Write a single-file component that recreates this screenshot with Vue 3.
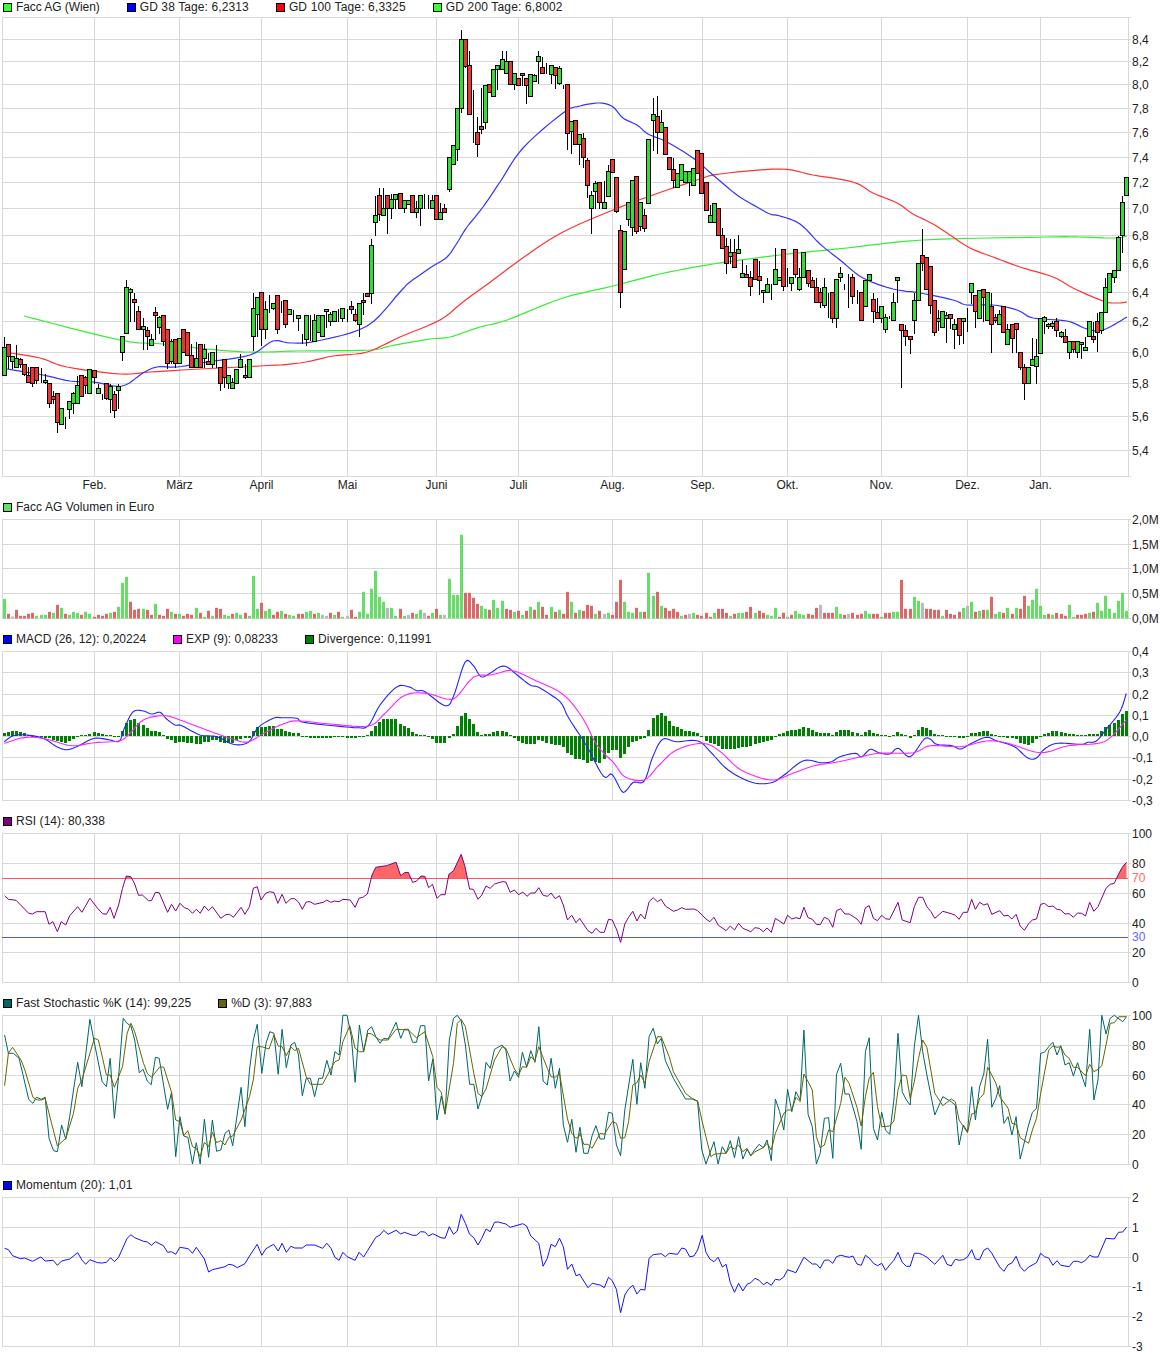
<script setup>
const N = 276
const barX = (i) => Math.floor(4.08 * i + 4.3) + 0.5
const monthX = [94, 179, 261, 347, 436, 518, 612, 702, 787, 881, 967, 1040]
const months = ['Feb.', 'März', 'April', 'Mai', 'Juni', 'Juli', 'Aug.', 'Sep.', 'Okt.', 'Nov.', 'Dez.', 'Jan.']
const LEFT = 2
const RIGHT = 1128

// flat [x, y, x, y...] to page coordinates
function pts(flat, x0 = 0, sx = 1, y0 = 0, sy = 1) {
  const out = []
  for (let i = 0; i < flat.length; i += 2) out.push([x0 + flat[i] / sx, y0 + flat[i + 1] / sy])
  return out
}
const str = (list) => list.map((p) => p[0].toFixed(1) + ',' + p[1].toFixed(1)).join(' ')
// second half wins where the two readings overlap
const join = (a, b) => [...a.filter((p) => p[0] < b[0][0]), ...b]
// catmull-rom through the read points, for the slow curves
function smooth(list, steps = 6) {
  const out = []
  for (let i = 0; i < list.length - 1; i++) {
    const p0 = list[Math.max(0, i - 1)]
    const p1 = list[i]
    const p2 = list[i + 1]
    const p3 = list[Math.min(list.length - 1, i + 2)]
    for (let s = 0; s < steps; s++) {
      const t = s / steps
      const at = (k) => 0.5 * (2 * p1[k] + (p2[k] - p0[k]) * t + (2 * p0[k] - 5 * p1[k] + 4 * p2[k] - p3[k]) * t * t + (3 * p1[k] - p0[k] - 3 * p2[k] + p3[k]) * t * t * t)
      out.push([at(0), at(1)])
    }
  }
  out.push(list[list.length - 1])
  return out
}

// candles, read off at 3x: colour + top,bottom,high,low
const candleBlocks = [
  { start: 0, base: 250, rows: `g292,376,258,376 r283,319,283,355 g319,334,319,355 g325,352,283,352 r328,343,322,352 r343,373,343,376 r376,397,349,397 r352,400,352,409 r352,391,352,400 t397,397,352,397 g391,397,370,400
    r400,460,400,470 r439,448,421,460 r430,517,430,545 g475,523,475,523 t499,499,499,533 g454,478,454,505 g430,460,424,488 g406,460,376,460
    r376,439,376,439 r382,406,376,430 g358,430,358,430 r361,382,361,400 g415,430,400,430 t439,439,430,448 r400,445,400,448 g409,448,400,485 r433,479,421,500 g409,421,400,475 g259,307,259,330 g112,250,88,250
    g118,127,112,214 r148,157,127,214 r184,238,166,238 g229,238,202,298 r241,259,229,298 g268,286,250,286 r187,196,169,268 g202,232,196,250 r196,274,196,286 r238,340,238,355 g274,334,265,340 r268,340,265,352 g265,340,265,340
    r238,307,238,307 r247,316,247,316 r316,352,280,352 g325,352,274,352 r283,352,283,352 g298,325,280,352 r334,343,307,343 g307,343,307,352 t343,343,283,352 r352,400,352,421 r328,382,328,412 g376,400,376,415 g397,415,380,415
    g358,400,355,400 g328,352,310,352 r376,382,340,385 g328,382,328,382 g175,259,127,300 g142,193,142,259 r127,238,127,285 g178,238,150,265 t133,133,133,185 g160,175,160,178 r136,238,136,250 t151,151,151,185
    r151,223,151,232 g178,193,178,193 t176,176,176,214 g196,205,196,240 t259,259,250,280 g196,268,196,285 t193,193,193,270 g211,274,190,274 g196,247,196,247 g196,259,196,259 g178,184,178,232 g193,214,184,225 g184,214,184,214 t187,187,175,214
    g175,205,175,214 t178,178,175,214 r169,178,150,190 r193,211,175,214 g160,223,160,258 r151,157,127,193 r130,139,127,139` },
  { start: 90, base: 0, rows: `g735,880,715,910 g646,667,586,706 r586,643,562,661 g625,646,562,646 r586,625,586,700 g598,625,580,655 g583,598,580,625` },
  { start: 97, base: 20, rows: `r520,565,520,565 g541,565,541,575 g541,553,541,553 r526,577,526,577 g565,577,540,590 g526,565,526,614 t527,527,520,565 t565,565,523,565 g541,565,523,565 r526,598,526,598 g577,598,545,598 r565,577,550,577
    g412,508,412,514 g376,433,373,433 g265,388,265,420 g58,265,28,275 r58,139,58,142 r136,283,91,283 t285,285,207,365 r337,373,289,408 r319,328,202,340 g196,307,196,325 r193,217,193,217 g148,229,148,229 g136,148,136,208 g118,148,90,148 g124,160,90,160 r124,193,124,193 g160,193,160,206 r175,196,175,196 r160,166,160,196 r175,196,175,248 g163,229,163,229 g166,184,160,184 g109,124,91,188
    r142,160,109,160 t160,160,127,160 g136,163,136,188 r142,166,142,205 g145,190,136,193 t204,204,193,204 r193,340,193,387 g304,334,304,400 r301,373,301,373 g343,373,343,433 r355,412,335,440 r421,496,412,530 g526,565,510,640 g490,514,480,565 r487,547,487,565 g547,565,480,565 g454,529,432,529 r418,457,418,457 r472,574,472,577
    r631,817,613,860 g634,748,631,748 g547,598,547,616 g481,622,481,645 r469,634,469,640 g547,619,547,631 r586,625,565,634 g358,550,358,550 g283,301,232,391 r289,337,226,400 g307,337,268,337 r322,403,322,403 r412,448,412,448 r448,481,412,500 g460,502,460,502 g433,481,433,481 g454,487,454,487 g454,487,454,524 g445,496,445,496
    r391,460,391,460 r400,520,400,520 r487,571,487,571 g586,607,553,607 g550,607,550,607 r565,646,565,646 r646,685,622,685 r679,730,650,760 g697,709,655,730 r697,742,655,742 g688,700,643,700 g760,772,718,772 r763,772,733,772 r772,799,750,826 r718,778,718,778 r769,781,720,823 g811,817,811,847 g793,817,772,817 t838,838,790,838 g748,793,680,793 g772,780,772,780` },
  { start: 191, base: 150, rows: `r297,409,297,420 t352,352,352,409 g382,400,382,421 r297,373,297,382 g382,418,352,421 g307,382,307,382 r361,400,361,409 r391,412,379,412 r412,457,382,457 r427,457,412,470 g412,466,382,470 t427,427,427,500 r427,505,427,517 g388,505,388,530 g370,382,348,394 t418,418,400,418 t418,418,370,470
    r382,439,370,460 t460,460,418,460 r427,511,427,511 g391,469,391,469 g373,391,373,391 r448,484,427,515 r487,505,440,505 g469,505,469,515 g502,538,490,547 t505,505,495,505 g457,511,427,511 g382,391,382,457 r523,541,523,710 r541,559,523,585 r559,568,559,608
    g451,511,427,550 g340,451,340,451 r316,340,235,361 r322,418,322,418 r349,466,349,490 r451,547,451,556 g505,514,478,540 g484,532,484,532 g496,505,484,577 r493,505,493,535 g523,538,505,593 r505,556,505,583 g505,514,505,580 t505,505,470,543 g400,427,400,460 r436,484,436,532 g421,505,421,505 r418,442,418,514 g427,511,427,511 r469,523,427,607 r502,511,490,515 g493,523,478,523
    r469,547,469,547 g538,583,520,583 r523,565,523,607 r520,538,520,607 r607,650,607,658 r652,700,640,748 g652,700,652,700 g628,646,560,646 g619,649,565,700 g505,610,505,610 g502,514,495,550 g523,529,517,535 g520,529,510,535 r514,541,502,557 g547,559,541,560 r559,577,535,577 g574,607,574,625 r574,598,574,607 g574,607,574,622 g577,583,577,625 g592,601,559,601 g514,559,514,559 r559,568,514,577 r514,547,487,602 g487,541,487,550
    g412,487,380,487 g370,427,370,427 g361,382,361,397 g262,361,256,361 g157,256,136,307 g82,136,79,136` },
]
const candleFill = { g: '#33dd33', r: '#ee3333', t: '#000000' }
const candles = []
for (const block of candleBlocks) {
  block.rows.trim().split(/\s+/).forEach((tok, k) => {
    const [t, b, h, l] = tok.slice(1).split(',').map((v) => Math.round(block.base + v / 3) + 0.5)
    const x = barX(block.start + k)
    candles.push({ x, t, b, h, l, fill: candleFill[tok[0]] })
  })
}

// volume: colour + top of bar at 3x (base line 371)
const volHead = `g312 r357 n365 r345 r363 r363 r357 r354 g363 g360 g360 r351 g354 r330 g339 r357 g360 g351 g354 r360 g351 g357 r366 r360 r363 r357 g354 r351 g336 g264 g246 r321 r345 r342 g342 r345 r360 g327 r360 r363 r342 g351 r357 g357 r363 r357 r360 g339 r354 g366 r348 g363 r339 r342 g360 g363 r357 g354 g360 r354 g363 g243 g342 r324 g348 g342 r360 r351 g348 r357 g360 g363 r357 r357 g351 g348 r357 g354 n360 n363 r354 g360 r351 g366 n363 r345 r366 g351 g291 g357 g282 g228 g306 g321 n339 g339 g363 r342 g363 n360 r354 g357 g345 n354 r363 g354 r342 g360 n360 g252 g300 g300 g120 r294 r294 r309 r327 g333 g342 r345 g315 g339`
const volTail = `g318 r342 r345 g351 r348 g360 r348 g336 r345 g321 r336 r360 g336 r351 g345 r357 r291 g321 r354 g345 r348 r330 r333 g357 r348 n357 g354 r360 r321 r255 g321 g351 g354 r339 g351 r351 g234 g303 r291 g333 r339 r348 r342 r351 g363 r360 n357 g354 r360 r363 r354 r366 g354 r342 r342 r354 g363 r357 g354 g354 r351 r336 g354 r348 r354 g360 g363 g339 r366 r354 g366 r360 g348 g357 g360 r357 r360 r339 n330 r354 r354 r354 g336 g357 r360 n357 r354 r360 r357 g348 g357 r357 r357 g366 r354 r354 g351 g351 r255 r342 r342 g306 g318 n324 r342 r342 r345 r345 g363 r345 r357 r360 r351 g339 n333 g321 r351 g348 r345 g345 r306 g357 g351 r354 g339 r357 g339 r342 r303 g333 g315 g282 g333 g360 r357 g360 r354 r357 r363 g330 g366 r360 r360 r357 g354 r351 g324 g348 g303 g342 g354 g318 g294 g348`
const volFill = { g: '#66dd66', r: '#dd6666', n: '#bbbbbb' }
const volBase = 618.5
const parseVol = (text, start) => text.split(' ').map((tok, k) => {
  const height = (371 - Number(tok.slice(1))) / 3
  return { x: barX(start + k) - 1.5, y: volBase - height, w: 3, h: height, fill: volFill[tok[0]] }
})
const headBars = parseVol(volHead, 0)
const tailList = volTail.split(' ')
const tailBars = parseVol(volTail, N - tailList.length)
const volBars = [...headBars.filter((b) => b.x < tailBars[0].x), ...tailBars]

// MACD
const histKeys = [
  ...pts([13,8,37,15,49,16,73,8,85,4,97,0,121,-3,145,-6,170,-14,196,-20,208,-14,220,-10,233,0,259,4,283,12,307,6,331,3,355,0,367,14,379,40,394,50,406,52,418,36,430,34,442,24,454,16,466,16,478,12,490,3,502,-10,514,-13,526,-20,538,-17,553,-20,577,-22,601,-23,613,-18,625,-18,637,-12,650,-12,661,-18,673,-20,685,-20,697,-22,712,-10,736,-6,748,-6,760,15,772,28,796,28,820,30,832,22,844,22,858,13,882,10,895,8,907,-3,955,-6,991,-6,1015,-3,1066,-6,1090,-3,1102,2,1114,14,1126,30,1138,42,1150,50,1190,50,1201,35,1213,30,1225,24,1237,12,1249,6,1273,3,1285,-3,1297,-10,1309,-20,1324,-22,1336,-22,1348,-8,1360,5,1372,28,1384,60,1396,70,1408,52,1420,38,1432,12,1444,2,1456,5,1468,5,1483,12,1495,15], 0, 3, 0, 3),
  ...pts([5,15,15,12,24,2,33,-6,42,-15,52,-20,61,-25,80,-25,89,-12,101,-17,120,-24,138,-28,147,-32,156,-50,166,-58,175,-68,193,-70,203,-82,214,-75,224,-80,233,-80,242,-72,252,-50,261,-42,270,-42,280,-65,289,-55,298,-35,308,-18,317,-15,326,-8,338,-5,347,25,356,55,366,62,375,68,384,60,394,45,403,30,412,26,421,22,431,16,440,14,451,12,461,10,470,-3,480,-14,489,-20,498,-24,507,-28,517,-38,526,-40,535,-40,545,-38,554,-35,573,-32,584,-28,593,-24,612,-18,621,-14,630,-12,640,-3,649,6,658,10,668,15,677,18,698,20,707,28,726,18,735,12,745,8,763,10,772,4,782,12,791,17,810,17,821,12,830,10,840,2,849,12,858,17,868,10,877,5,896,2,905,-2,915,4,924,12,935,4,944,2,953,-8,963,3,972,18,981,28,991,24,1000,18,1009,6,1028,2,1048,-2,1067,-6,1076,-5,1086,-2,1095,9,1104,10,1123,15,1132,15,1141,6,1151,4,1170,-3,1199,-8,1209,-20,1228,-26,1237,-20,1247,-8,1256,-2,1265,5,1284,16,1303,12,1322,6,1350,3,1368,5,1387,6,1396,15,1408,27,1417,33,1426,38,1436,47,1445,65,1455,76], 500, 2.323, 0, 3),
]
function histAt(x) {
  let k = 0
  while (k < histKeys.length - 2 && histKeys[k + 1][0] < x) k++
  const [x1, y1] = histKeys[k]
  const [x2, y2] = histKeys[k + 1]
  const f = Math.min(1, Math.max(0, (x - x1) / (x2 - x1)))
  return y1 + (y2 - y1) * f
}
const macdZero = 736
const histBars = Array.from({ length: N }, (_, i) => {
  const x = barX(i)
  const v = Math.round(histAt(x))
  return { x: x - 1.5, y: v > 0 ? macdZero - v : macdZero, w: 3, h: Math.max(1, Math.abs(v)), fill: '#008000' }
})

const macdLine = join(
  pts([13,740,40,722,80,720,130,730,170,755,200,764,230,755,283,730,330,735,358,738,375,695,400,650,430,648,455,657,480,652,500,672,525,690,545,692,600,720,650,725,700,748,745,742,775,697,820,670,845,668,890,670,910,682,1000,692,1070,698,1105,692,1140,630,1190,576,1225,575,1250,587,1275,590,1335,632,1360,605,1395,502,1420,512,1443,545,1470,535,1497,517], 0, 3, 495, 3),
  pts([15,515,40,540,70,570,90,577,130,610,145,630,160,670,200,750,240,843,260,838,282,887,292,888,310,862,335,858,355,785,378,733,410,740,460,738,490,772,530,825,585,862,630,863,660,840,705,797,745,803,770,800,790,785,825,775,840,785,860,763,880,773,905,777,925,760,953,785,985,733,1000,733,1015,748,1050,752,1070,762,1095,745,1130,727,1155,738,1195,755,1225,788,1245,790,1265,762,1295,745,1350,748,1365,742,1385,738,1410,700,1440,650,1455,595], 500, 2.323, 495, 3),
)
const expLine = join(
  pts([13,745,60,730,100,727,150,735,215,752,283,743,355,738,385,720,430,675,490,662,540,675,620,705,700,733,745,740,800,710,860,683,900,678,1000,688,1105,693,1150,660,1200,610,1240,594,1290,597,1340,612,1370,605,1420,547,1470,540,1497,534], 0, 3, 495, 3),
  pts([30,527,80,555,145,597,190,665,225,750,265,805,290,845,335,855,370,810,410,765,470,745,510,768,560,825,630,855,680,835,730,812,780,802,840,785,880,775,960,773,1000,752,1070,755,1130,738,1180,745,1255,773,1320,752,1390,745,1420,725,1455,675], 500, 2.323, 495, 3),
)

// RSI
const rsiLine = join(
  pts([12,257,22,268,42,271,75,310,85,312,95,305,118,305,128,343,138,335,150,365,160,335,172,345,182,317,203,290,214,307,235,265,255,295,268,311,278,313,288,292,298,325,310,285,320,235,330,198,342,200,352,222,362,256,372,255,388,272,396,272,406,247,416,248,438,307,448,283,459,303,470,280,482,293,492,297,503,310,513,298,523,310,534,288,545,302,555,290,577,325,590,314,600,313,610,322,630,292,640,313,652,290,662,235,672,230,682,270,694,250,705,245,716,248,726,280,737,253,747,280,760,266,770,266,780,276,790,298,800,276,810,275,822,283,845,277,854,270,864,277,874,273,886,275,896,268,915,270,928,292,938,265,948,262,960,252,972,195,982,172,1010,167,1035,157,1047,197,1057,188,1067,187,1078,217,1088,214,1100,198,1110,199,1120,233,1130,223,1142,265,1152,254,1163,254,1173,193,1185,182,1205,133,1215,170,1227,237,1237,238,1249,268,1259,255,1270,228,1281,235,1292,222,1312,215,1322,216,1333,247,1344,240,1355,254,1366,246,1377,259,1387,249,1398,249,1408,233,1419,256,1430,259,1440,249,1451,266,1462,257,1472,285,1483,330,1494,316,1505,338,1515,325,1535,365,1546,372,1557,355], 0, 2.613, 810, 3),
  pts([0,327,21,362,32,370,42,355,53,367,64,367,75,328,85,330,97,360,107,397,118,342,128,322,139,304,150,333,160,312,171,327,182,275,193,263,204,275,214,268,225,288,246,304,257,300,268,293,278,298,300,297,310,302,332,327,342,335,353,322,364,345,385,362,396,348,407,360,418,340,429,355,450,365,461,353,472,355,483,365,493,354,504,367,515,325,537,342,547,316,558,327,569,323,580,326,590,292,601,323,612,328,623,343,633,344,644,322,655,328,666,352,676,302,687,296,698,312,709,312,730,327,741,343,752,293,762,287,773,325,784,332,795,316,805,326,816,328,838,277,849,330,870,338,881,290,892,262,903,262,914,290,924,304,935,325,956,304,978,311,989,316,999,328,1010,307,1021,307,1032,268,1042,298,1053,277,1064,285,1074,281,1085,313,1106,302,1117,318,1128,316,1138,327,1149,313,1160,348,1171,361,1182,341,1192,330,1203,327,1214,283,1224,280,1235,290,1246,288,1257,298,1267,300,1278,312,1289,311,1300,322,1311,309,1322,310,1332,318,1343,277,1354,304,1365,290,1386,235,1397,223,1408,220,1420,190,1430,170,1440,157], 580, 2.635, 810, 3),
)
const rsiArea = str([[rsiLine[0][0], 878.5], ...rsiLine, [rsiLine[rsiLine.length - 1][0], 878.5]])

// stochastic
const stochK = join(
  pts([12,135,22,190,35,190,50,205,75,328,86,340,95,322,108,328,118,322,128,445,140,482,150,485,161,405,172,448,182,380,192,300,203,217,214,290,235,88,245,150,267,275,278,290,288,205,299,385,310,260,322,85,332,100,342,108,352,150,364,248,374,238,385,273,395,284,406,202,416,205,438,358,448,307,459,500,470,380,480,438,491,442,503,522,513,458,523,522,534,388,545,502,555,390,566,484,577,480,588,430,598,420,608,467,630,292,640,410,652,240,662,150,672,103,684,250,695,160,705,125,716,130,727,253,737,118,748,233,760,165,770,157,780,195,790,317,800,265,811,265,822,320,833,265,843,265,854,211,865,255,875,185,886,195,896,76,907,76,918,140,928,277,939,105,950,185,961,120,971,110,982,140,993,160,1003,145,1014,147,1035,97,1047,145,1057,118,1067,118,1078,157,1088,157,1099,107,1110,107,1120,273,1131,207,1142,390,1153,318,1163,373,1174,150,1185,85,1195,76,1205,92,1216,165,1227,283,1238,283,1249,357,1259,320,1270,217,1281,235,1292,178,1312,165,1322,180,1333,273,1344,243,1355,262,1365,187,1376,230,1387,182,1398,217,1408,110,1419,273,1430,285,1440,205,1451,295,1462,235,1472,405,1483,457,1494,388,1505,487,1515,412,1526,490,1537,490,1557,407], 0, 2.613, 990, 3),
  pts([0,412,10,490,21,490,32,437,42,407,53,447,64,447,75,367,85,370,96,465,107,497,118,360,139,208,150,343,160,218,171,295,182,140,193,115,204,162,214,145,225,212,246,265,278,327,300,327,310,335,321,480,332,522,353,455,364,522,375,470,385,490,396,452,407,503,418,440,429,507,440,478,450,497,461,478,472,463,483,473,493,450,504,512,515,327,526,365,537,420,547,298,558,365,569,305,580,330,590,120,601,373,612,410,623,522,633,490,644,385,655,383,666,505,676,253,687,220,698,312,709,312,730,395,741,478,752,185,762,143,773,415,784,450,795,367,805,420,816,433,827,330,838,130,849,305,860,330,870,345,881,170,892,76,903,185,914,255,935,375,956,320,978,335,989,345,999,465,1010,405,1021,425,1032,290,1042,390,1053,290,1064,252,1074,148,1085,352,1096,325,1106,287,1117,400,1128,380,1138,435,1149,380,1160,507,1182,405,1192,367,1203,355,1214,190,1224,187,1235,170,1246,157,1257,195,1267,167,1278,225,1289,218,1300,258,1311,218,1332,290,1343,118,1354,330,1365,270,1375,76,1386,132,1397,85,1408,76,1430,95,1440,80], 580, 2.635, 990, 3),
)
const stochD = join(
  pts([12,287,22,190,33,172,55,210,65,240,86,322,97,330,108,330,118,325,150,468,172,445,192,370,203,295,214,270,235,190,247,145,257,150,278,255,288,255,299,292,320,230,332,130,342,100,352,125,375,220,385,250,396,262,418,230,428,232,448,307,459,390,470,395,480,437,491,422,503,470,513,475,523,500,534,457,545,470,555,427,566,458,577,452,588,465,598,442,608,438,630,390,652,320,662,270,672,170,684,170,703,177,716,135,727,168,737,170,748,197,760,170,770,182,780,175,800,260,811,283,843,283,865,235,875,215,886,210,896,155,914,107,928,175,939,185,950,185,961,130,971,132,993,150,1014,150,1035,118,1067,120,1088,143,1110,125,1131,200,1142,292,1153,307,1163,370,1185,220,1195,100,1205,88,1216,110,1238,250,1249,310,1259,320,1270,297,1292,210,1312,170,1322,175,1344,237,1355,255,1365,230,1376,232,1387,200,1398,212,1408,170,1430,235,1440,260,1451,262,1462,250,1483,387,1494,430,1505,445,1515,437,1526,463,1537,463,1547,470], 0, 2.613, 990, 3),
  pts([0,430,10,463,21,463,32,475,53,430,64,433,85,395,96,400,107,445,118,443,128,395,139,285,150,278,160,255,171,280,182,215,204,140,214,140,235,200,246,245,278,310,300,330,310,332,321,390,345,500,353,493,375,490,385,490,396,470,407,477,418,465,429,485,440,475,450,497,461,485,483,473,493,460,504,480,515,430,537,370,547,360,558,360,569,322,580,335,590,252,601,275,612,300,623,440,633,473,644,465,655,420,666,425,687,340,698,262,709,280,730,352,741,408,752,320,762,265,773,247,784,350,795,410,816,408,827,393,838,300,849,255,860,257,870,325,881,275,892,205,903,150,914,172,935,310,956,347,978,327,989,335,999,390,1021,428,1032,372,1042,368,1053,325,1064,312,1074,232,1085,255,1096,280,1106,320,1128,355,1138,400,1149,403,1160,443,1182,460,1192,420,1203,385,1214,310,1235,180,1246,168,1257,172,1267,170,1278,195,1289,205,1300,232,1311,232,1332,257,1343,223,1354,245,1365,238,1375,227,1386,165,1397,100,1408,98,1420,80,1440,80], 580, 2.635, 990, 3),
)

// momentum
const momLine = join(
  pts([12,220,22,224,33,242,53,251,64,249,85,259,107,246,118,258,139,256,150,271,161,258,182,252,203,233,214,255,224,268,235,254,255,263,267,264,278,262,289,248,299,260,310,247,332,190,342,179,352,188,375,199,385,201,396,211,406,200,427,212,438,232,448,230,459,238,470,217,492,221,503,235,513,217,534,252,545,291,555,284,588,275,598,268,608,270,620,278,640,266,652,243,672,208,684,241,695,221,715,208,727,228,737,205,748,232,760,214,770,219,790,219,800,210,822,210,843,220,854,205,865,220,875,247,886,256,896,232,907,245,928,256,938,232,950,246,961,226,982,187,993,180,1003,166,1014,178,1035,166,1047,177,1057,172,1078,181,1088,181,1099,170,1110,171,1120,183,1131,176,1152,188,1163,190,1174,155,1185,178,1195,168,1205,118,1216,145,1227,178,1238,188,1249,210,1259,190,1270,162,1281,170,1292,142,1302,141,1322,147,1333,157,1366,146,1376,153,1387,183,1408,205,1419,274,1430,250,1440,208,1451,215,1462,190,1472,215,1483,283,1494,267,1505,302,1515,298,1536,338,1547,324], 0, 2.613, 1175, 3),
  pts([0,300,21,338,32,325,53,330,64,338,75,307,85,317,96,343,107,413,118,360,128,342,139,331,150,357,160,343,171,345,182,250,193,239,214,236,225,245,235,235,257,238,268,219,278,222,289,245,300,243,310,225,322,181,332,232,342,252,353,260,364,247,375,276,385,268,396,323,407,352,418,325,429,348,440,328,450,323,461,310,472,316,483,329,493,322,504,331,515,313,526,315,537,306,547,284,569,293,590,247,612,267,623,267,633,280,644,256,655,255,666,265,676,245,687,241,709,247,719,243,730,267,741,271,752,241,762,249,773,265,784,272,795,265,805,286,816,270,827,256,838,232,849,262,860,274,870,274,881,235,892,235,903,239,914,247,935,268,956,241,967,268,978,273,989,253,999,256,1010,254,1021,246,1032,224,1042,252,1053,254,1064,226,1074,219,1085,235,1106,276,1117,289,1128,269,1138,264,1149,244,1160,275,1171,289,1182,276,1203,263,1214,235,1224,245,1235,249,1246,271,1257,257,1267,271,1289,275,1300,259,1311,259,1322,263,1332,256,1343,241,1354,246,1365,246,1386,190,1408,192,1419,172,1430,171,1440,157], 580, 2.635, 1175, 3),
)

// moving averages, already in page coordinates
const gd200 = pts([24,316,120,340,163,344,207,349,250,352,300,351,370,350,390,346,430,339,450,337,480,327,507,320,563,298,613,286,660,274,713,264,780,255,847,248,923,240,1047,237,1080,237,1113,238,1127,236])
const gd100 = pts([10,353,40,358,67,367,120,374,150,372,200,369,260,366,300,363,333,356,367,352,400,337,440,320,463,302,493,280,527,255,563,232,613,210,653,195,700,179,720,174,780,169,813,175,853,182,873,193,897,203,913,214,933,224,953,237,970,248,993,257,1020,267,1053,277,1073,288,1103,301,1117,303,1127,302])
const gd38 = pts([7,369,43,375,70,381,93,382,122,386,143,373,157,367,177,367,207,362,250,355,273,341,290,343,317,341,367,326,400,292,410,282,433,266,447,257,457,243,467,227,483,207,500,182,523,148,563,113,580,106,600,103,613,107,623,118,637,125,648,134,667,142,693,158,713,175,737,195,757,207,770,214,780,216,800,224,820,244,840,260,863,278,893,289,920,293,953,300,967,305,993,305,1017,310,1033,318,1067,321,1087,329,1103,330,1127,317])

const line = (list, color, width = 1) => ({ points: str(list), color, width })
const straight = (y, color) => ({ points: LEFT + ',' + y + ' ' + RIGHT + ',' + y, color, width: 1 })

const panels = [
  {
    key: 'kurs', top: 13, height: 487,
    legend: [
      { color: '#33ff33', label: 'Facc AG (Wien)', spacing: -0.07 },
      { color: '#0000ff', label: 'GD 38 Tage: 6,2313', spacing: 0.11 },
      { color: '#ff0000', label: 'GD 100 Tage: 6,3325', spacing: 0.16 },
      { color: '#33ff33', label: 'GD 200 Tage: 6,8002', spacing: 0.16 },
    ],
    plotTop: 17, plotBottom: 476,
    rows: [[39,'8,4'],[61,'8,2'],[84,'8,0'],[108,'7,8'],[132,'7,6'],[157,'7,4'],[182,'7,2'],[208,'7,0'],[235,'6,8'],[263,'6,6'],[292,'6,4'],[321,'6,2'],[352,'6,0'],[383,'5,8'],[416,'5,6'],[450,'5,4']],
    lines: [line(smooth(gd200), '#33ee33', 1.2), line(smooth(gd100), '#ff3333', 1.2), line(smooth(gd38), '#3333ff', 1.2)],
    candles,
    months: true,
  },
  {
    key: 'volumen', top: 513, height: 119,
    legend: [{ color: '#66dd66', label: 'Facc AG Volumen in Euro', spacing: 0.04 }],
    plotTop: 519, plotBottom: 618,
    rows: [[519,'2,0M'],[544,'1,5M'],[568,'1,0M'],[593,'0,5M'],[618,'0,0M']],
    bars: volBars,
  },
  {
    key: 'macd', top: 645, height: 169,
    legend: [
      { color: '#0000ff', label: 'MACD (26, 12): 0,20224', spacing: 0 },
      { color: '#ff00ff', label: 'EXP (9): 0,08233', spacing: 0 },
      { color: '#008000', label: 'Divergence: 0,11991', spacing: 0.2 },
    ],
    plotTop: 651, plotBottom: 800,
    rows: [[651,'0,4'],[672,'0,3'],[694,'0,2'],[715,'0,1'],[736,'0,0'],[757,'-0,1'],[779,'-0,2'],[800,'-0,3']],
    bars: histBars,
    lines: [line(smooth(macdLine), '#2222ff', 1.1), line(smooth(expLine), '#ff22ff', 1.1)],
  },
  {
    key: 'rsi', top: 827, height: 169,
    legend: [{ color: '#800080', label: 'RSI (14): 80,338', spacing: 0.06 }],
    plotTop: 833, plotBottom: 982,
    rows: [[833,'100'],[863,'80'],[893,'60'],[923,'40'],[952,'20'],[982,'0']],
    extraLabels: [[878,'70','#ff6666'],[937,'30','#6666ff']],
    area: rsiArea,
    lines: [straight(878.5, '#ff5555'), straight(937.5, '#5555ee'), line(rsiLine, '#800080')],
  },
  {
    key: 'stoch', top: 1009, height: 169,
    legend: [
      { color: '#006666', label: 'Fast Stochastic %K (14): 99,225', spacing: 0.1 },
      { color: '#666600', label: '%D (3): 97,883', spacing: 0 },
    ],
    plotTop: 1015, plotBottom: 1164,
    rows: [[1015,'100'],[1045,'80'],[1075,'60'],[1104,'40'],[1134,'20'],[1164,'0']],
    lines: [line(stochK, '#006666'), line(stochD, '#666600')],
  },
  {
    key: 'momentum', top: 1191, height: 167,
    legend: [{ color: '#0000ff', label: 'Momentum (20): 1,01', spacing: 0.1 }],
    plotTop: 1197, plotBottom: 1346,
    rows: [[1197,'2'],[1227,'1'],[1257,'0'],[1286,'-1'],[1316,'-2'],[1346,'-3']],
    lines: [line(momLine, '#1111ff')],
  },
]
</script>

<template>
  <div class="chart">
    <section v-for="p in panels" :key="p.key" class="panel">
      <div class="legend">
        <span v-for="item in p.legend" :key="item.label" class="legend-item" :style="{ letterSpacing: item.spacing + 'px' }">
          <i class="swatch" :style="{ background: item.color }"></i>{{ item.label }}
        </span>
      </div>
      <svg class="plot" width="1175" :height="p.height" :viewBox="`0 ${p.top} 1175 ${p.height}`">
        <clipPath v-if="p.area" id="rsi-clip">
          <rect x="0" :y="p.plotTop" width="1175" height="45.5" />
        </clipPath>

        <g class="grid">
          <line v-for="x in monthX" :key="x" :x1="x + 0.5" :x2="x + 0.5" :y1="p.plotTop" :y2="p.plotBottom + 0.5" />
          <line :x1="LEFT + 0.5" :x2="LEFT + 0.5" :y1="p.plotTop" :y2="p.plotBottom + 0.5" />
          <line :x1="RIGHT + 0.5" :x2="RIGHT + 0.5" :y1="p.plotTop" :y2="p.plotBottom + 0.5" />
          <line :x1="LEFT" x2="1131" :y1="p.plotTop + 0.5" :y2="p.plotTop + 0.5" />
          <line :x1="LEFT" x2="1131" :y1="p.plotBottom + 0.5" :y2="p.plotBottom + 0.5" />
          <line v-for="r in p.rows" :key="r[1]" :x1="LEFT" x2="1131" :y1="r[0] + 0.5" :y2="r[0] + 0.5" />
        </g>

        <rect v-for="(b, i) in p.bars" :key="i" :x="b.x" :y="b.y" :width="b.w" :height="b.h" :fill="b.fill" />

        <polygon v-if="p.area" :points="p.area" fill="#ff6666" clip-path="url(#rsi-clip)" />

        <polyline v-for="(l, i) in p.lines" :key="i" class="curve" :points="l.points" :stroke="l.color" :stroke-width="l.width" />

        <g v-if="p.candles" class="candles">
          <g v-for="(c, i) in p.candles" :key="i">
            <line :x1="c.x" :x2="c.x" :y1="c.h" :y2="c.l" />
            <rect :x="c.x - 2" :y="c.t" width="4" :height="c.b - c.t" :fill="c.fill" />
          </g>
        </g>

        <text v-for="r in p.rows" :key="r[1]" class="axis" x="1132" :y="r[0] + 5" fill="#222">{{ r[1] }}</text>
        <text v-for="r in p.extraLabels" :key="r[1]" class="axis" x="1132" :y="r[0] + 4" :fill="r[2]">{{ r[1] }}</text>
        <template v-if="p.months">
          <text v-for="(m, i) in months" :key="m" class="axis month" :x="monthX[i] + 0.5" y="489" fill="#222">{{ m }}</text>
        </template>
      </svg>
    </section>
  </div>
</template>

<style scoped>
.chart {
  width: 1175px;
  height: 1358px;
  background: #fff;
  font-family: "Liberation Sans", Arial, sans-serif;
  overflow: hidden;
}
.panel { display: block; }
.legend {
  display: flex;
  box-sizing: border-box;
  align-items: center;
  gap: 27px;
  height: 13px;
  padding: 1px 0 0 3px;
  font-size: 12px;
  line-height: 12px;
  color: #222;
  white-space: nowrap;
}
.legend-item { display: flex; align-items: center; }
.swatch {
  display: block;
  box-sizing: border-box;
  width: 9px;
  height: 9px;
  margin-right: 4px;
  border: 1px solid #000;
}
.plot { display: block; }
.grid line { stroke: #d8d8d8; stroke-width: 1; shape-rendering: crispEdges; }
.curve { fill: none; stroke-linejoin: round; }
.candles line { stroke: #000; stroke-width: 1; shape-rendering: crispEdges; }
.candles rect { stroke: #000; stroke-width: 1; shape-rendering: crispEdges; }
.axis { font-size: 12px; }
.month { text-anchor: middle; }
</style>
